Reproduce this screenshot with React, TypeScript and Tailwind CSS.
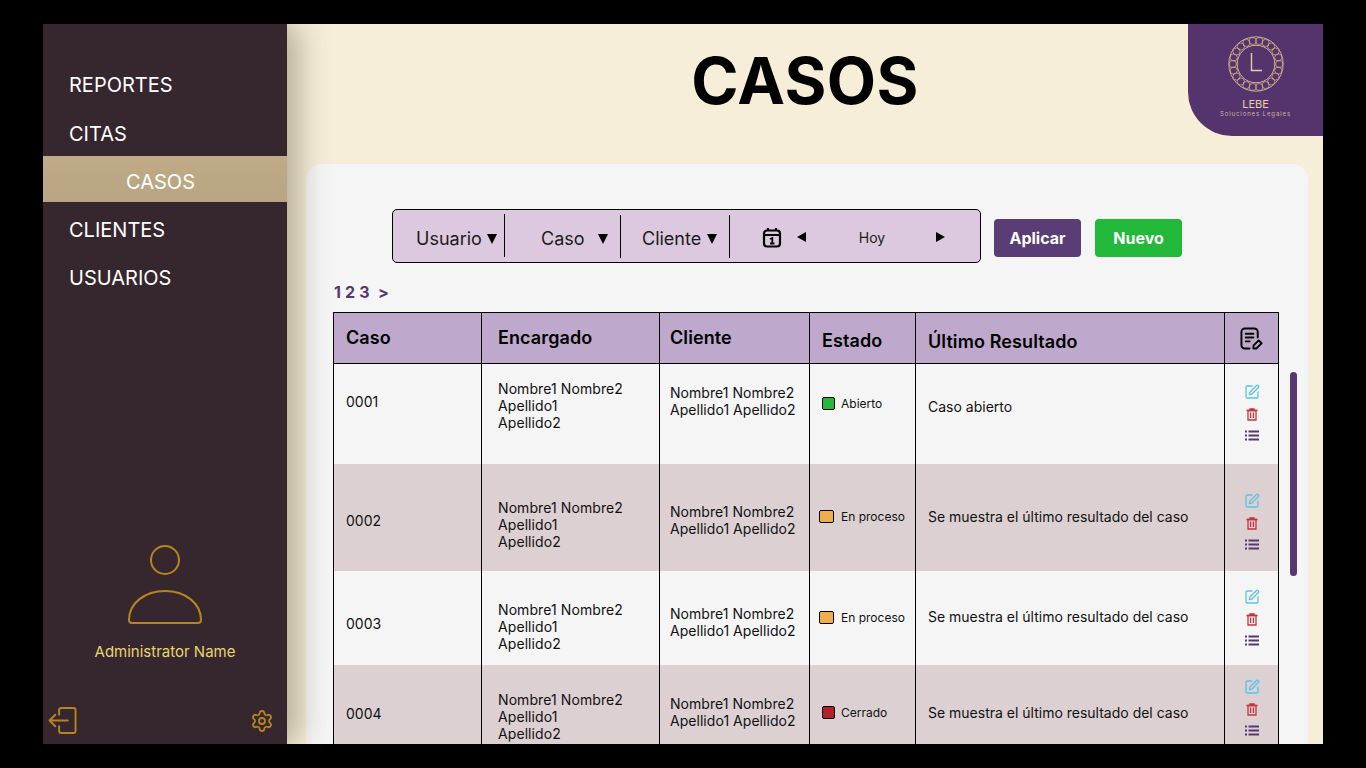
import React from 'react';
import { Settings, SquarePen } from 'lucide-react';

const font = 'font-["Inter",sans-serif]';

const NOMBRE = 'Nombre1 Nombre2';

const rows = [
    {
        caso: '0001', row: 'h-[100px] bg-[#f5f5f5]', casoPos: 'pt-[29px]', encPos: 'pt-[16px]', cliPos: 'pt-[20px]', estPos: 'pt-[31px] pl-[12px]',
        resPos: 'pt-[34px]', icoPos: 'pt-[20px]', estado: 'Abierto', color: 'bg-[#22b83a]', sw: 'w-[13px]', gap: 'gap-[6px]',
        resultado: 'Caso abierto',
    },
    {
        caso: '0002', row: 'h-[107px] bg-[#dcd0d3]', casoPos: 'pt-[48px]', encPos: 'pt-[35px]', cliPos: 'pt-[39px]', estPos: 'pt-[44px] pl-[9px]',
        resPos: 'pt-[44px]', icoPos: 'pt-[29px]', estado: 'En proceso', color: 'bg-[#f0ad4e]', sw: 'w-[15px]', gap: 'gap-[7px]',
        resultado: 'Se muestra el último resultado del caso',
    },
    {
        caso: '0003', row: 'h-[94px] bg-[#f5f5f5]', casoPos: 'pt-[44px]', encPos: 'pt-[30px]', cliPos: 'pt-[34px]', estPos: 'pt-[38px] pl-[9px]',
        resPos: 'pt-[37px]', icoPos: 'pt-[18px]', estado: 'En proceso', color: 'bg-[#f0ad4e]', sw: 'w-[15px]', gap: 'gap-[7px]',
        resultado: 'Se muestra el último resultado del caso',
    },
    {
        caso: '0004', row: 'h-[90px] bg-[#dcd0d3]', casoPos: 'pt-[40px]', encPos: 'pt-[26px]', cliPos: 'pt-[30px]', estPos: 'pt-[39px] pl-[12px]',
        resPos: 'pt-[39px]', icoPos: 'pt-[14px]', estado: 'Cerrado', color: 'bg-[#b3202a]', sw: 'w-[13px]', gap: 'gap-[6px]',
        resultado: 'Se muestra el último resultado del caso',
    },
];

const Triangle: React.FC<{ dir: 'down' | 'left' | 'right'; className?: string }> = ({ dir, className }) => {
    const points = dir === 'down' ? '0,0 10,0 5,10' : dir === 'left' ? '9,0 9,10 0,5' : '0,0 9,5 0,10';
    return (
        <svg viewBox={dir === 'down' ? '0 0 10 10' : '0 0 9 10'} className={className} fill="black">
            <polygon points={points} />
        </svg>
    );
};

// ring of small interlaced loops around the L
const knots = Array.from({ length: 22 }, (_, i) => {
    const a = (i / 22) * Math.PI * 2;
    return { cx: 28 + Math.cos(a) * 23.2, cy: 28 + Math.sin(a) * 23.2 };
});

const Logo: React.FC = () => (
    <div className="absolute top-0 right-0 w-[135px] h-[112px] bg-[#55346e] rounded-bl-[44px] flex flex-col items-center">
        <svg viewBox="0 0 56 56" className="w-[56px] h-[56px] mt-[12px] shrink-0" fill="none" stroke="#d8b98a">
            <circle cx="28" cy="28" r="27.2" strokeWidth="0.9" />
            {knots.map((k, i) => (
                <circle key={i} cx={k.cx} cy={k.cy} r="3.6" strokeWidth="0.7" />
            ))}
            <circle cx="28" cy="28" r="18.8" strokeWidth="1" />
            <path d="M23.5 17V34.5H34" strokeWidth="1.4" stroke="#e6cb9f" />
        </svg>
        <span className={`${font} text-[11px] leading-[12px] mt-[6px] text-[#e6cfa8]`}>LEBE</span>
        <span className={`${font} text-[6px] leading-[8px] tracking-[0.9px] text-[#cbb49a]`}>Soluciones Legales</span>
    </div>
);

const CalendarIcon: React.FC = () => (
    <svg viewBox="0 0 20 21" className="w-[20px] h-[21px]" fill="none" stroke="black" strokeWidth="2.2">
        <rect x="2" y="3.5" width="16" height="16" rx="3" />
        <path d="M2 8H18M6 1V4M14 1V4" />
        <path d="M8 12L10.3 11V16.5M8 16.5H12.5" strokeWidth="1.8" />
    </svg>
);

const NoteEditIcon: React.FC = () => (
    <svg viewBox="0 0 24 24" className="w-[23px] h-[23px] mt-[1px]" fill="none" stroke="black" strokeWidth="2" strokeLinecap="round" strokeLinejoin="round">
        <path d="M10 22.5H5a3.5 3.5 0 0 1-3.5-3.5V5A3.5 3.5 0 0 1 5 1.5h10A3.5 3.5 0 0 1 18.5 5v6" />
        <path d="M6 7H14M6 11H14M6 15H10" />
        <path d="M14 22.5v-3L19.5 14l3 3L17 22.5Z" />
    </svg>
);

const TrashIcon: React.FC = () => (
    <svg viewBox="0 0 12 13" className="w-[12px] h-[13px] mb-[9px]" fill="none" stroke="#c8323c" strokeWidth="1.3">
        <path d="M0.5 2.5H11.5M4 2.5V1H8V2.5" />
        <path d="M2 2.5V12H10V2.5Z" />
        <path d="M4.6 4.5V10M7.4 4.5V10" />
    </svg>
);

const ListIcon: React.FC = () => (
    <svg viewBox="0 0 14 11" className="w-[14px] h-[11px]" fill="#56386f">
        <rect x="0" y="0.5" width="2" height="2" />
        <rect x="3.5" y="0.5" width="10.5" height="2" />
        <rect x="0" y="4.5" width="2" height="2" />
        <rect x="3.5" y="4.5" width="10.5" height="2" />
        <rect x="0" y="8.5" width="2" height="2" />
        <rect x="3.5" y="8.5" width="10.5" height="2" />
    </svg>
);

const LogoutIcon: React.FC = () => (
    <svg viewBox="0 0 30 28" className="w-[30px] h-[27px]" fill="none" stroke="#b5851f" strokeWidth="2" strokeLinecap="round" strokeLinejoin="round">
        <path d="M11 8V3a2 2 0 0 1 2-2h13a2 2 0 0 1 2 2v22a2 2 0 0 1-2 2H13a2 2 0 0 1-2-2v-5" />
        <path d="M20 14H1M7 8L1 14L7 20" />
    </svg>
);

const UserIcon: React.FC = () => (
    <svg viewBox="0 0 76 79" className="w-[76px] h-[79px]" fill="none" stroke="#b5851f" strokeWidth="2">
        <circle cx="38" cy="15" r="14" />
        <path d="M5 78a3 3 0 0 1-3-3C2 58 18 46 38 46S74 58 74 75a3 3 0 0 1-3 3Z" />
    </svg>
);

const Sidebar: React.FC = () => (
    <aside className={`${font} relative z-10 w-[244px] shrink-0 h-full bg-[#36262d] flex flex-col shadow-[10px_0_30px_rgba(70,60,40,0.4)] text-white text-[20px]`}>
        <nav className="pt-[37px] flex flex-col">
            <a className="h-12 flex items-center pl-[26px]">REPORTES</a>
            <a className="h-[47px] flex items-center pl-[26px] pt-[2px]">CITAS</a>
            <a className="h-[46px] mb-[3px] flex items-center pl-[83px] pt-[5px] bg-gradient-to-b from-[#c0aa88] to-[#b9a583]">CASOS</a>
            <a className="h-12 flex items-center pl-[26px] pt-[1px]">CLIENTES</a>
            <a className="h-12 flex items-center pl-[26px] pt-[1px]">USUARIOS</a>
        </nav>
        <div className="mt-auto flex flex-col items-center">
            <UserIcon />
            <span className="text-[15px] leading-[20px] mt-[18px] text-[#e9d56f]">Administrator Name</span>
        </div>
        <div className="flex items-center justify-between mt-[45px] mb-[10px] pl-[5px] pr-[13px]">
            <LogoutIcon />
            <Settings size={24} color="#b5851f" strokeWidth={1.8} />
        </div>
    </aside>
);

const FilterBar: React.FC = () => (
    <div className="w-[589px] h-[54px] bg-[#dcc9df] border border-black rounded-[5px] flex items-center text-[18px] text-[#1c1c1c]">
        <div className="w-[112px] h-[43px] -mt-[1px] pt-[5px] border-r border-black flex items-center pl-[23px] gap-[5px]">
            <span>Usuario</span>
            <Triangle dir="down" className="w-[10px] h-[10px] mt-[2px]" />
        </div>
        <div className="w-[116px] h-[43px] mt-[1px] pt-[3px] border-r border-black flex items-center pl-[36px] gap-[13px]">
            <span>Caso</span>
            <Triangle dir="down" className="w-[10px] h-[10px] mt-[2px]" />
        </div>
        <div className="w-[109px] h-[43px] mt-[1px] pt-[3px] border-r border-black flex items-center pl-[21px] gap-[6px]">
            <span>Cliente</span>
            <Triangle dir="down" className="w-[10px] h-[10px] mt-[2px]" />
        </div>
        <div className="flex-1 flex items-center pl-[32px] pt-[2px]">
            <CalendarIcon />
            <Triangle dir="left" className="w-[9px] h-[10px] ml-[15px]" />
            <span className="w-[130px] pl-[2px] text-center text-[14px]">Hoy</span>
            <Triangle dir="right" className="w-[9px] h-[10px]" />
        </div>
    </div>
);

const Cell: React.FC<{ className: string; children: React.ReactNode }> = ({ className, children }) => (
    <div className={`${className} h-full text-[14px] leading-[17px] text-[#111] border-r border-black shrink-0`}>{children}</div>
);

const Table: React.FC = () => (
    <div className="w-[946px] shrink-0 border-l border-t border-black">
        <div className="h-[51px] flex bg-[#bea9cc] border-b border-black text-[18px] tracking-[0.1px] font-semibold text-black">
            <div className="w-[148px] h-full border-r border-black pl-[12px] pt-[11px]">Caso</div>
            <div className="w-[178px] h-full border-r border-black pl-[16px] pt-[11px]">Encargado</div>
            <div className="w-[150px] h-full border-r border-black pl-[10px] pt-[11px]">Cliente</div>
            <div className="w-[106px] h-full border-r border-black pl-[12px] pt-[14px]">Estado</div>
            <div className="w-[309px] h-full border-r border-black pl-[12px] pt-[15px]">Último Resultado</div>
            <div className="w-[54px] h-full border-r border-black flex items-center justify-center"><NoteEditIcon /></div>
        </div>
        {rows.map((r) => (
            <div key={r.caso} className={`${r.row} flex`}>
                <Cell className={`w-[148px] pl-[12px] ${r.casoPos}`}>{r.caso}</Cell>
                <Cell className={`w-[178px] pl-[16px] tracking-[0.08px] ${r.encPos}`}>
                    {NOMBRE}<br />Apellido1<br />Apellido2
                </Cell>
                <Cell className={`w-[150px] pl-[10px] tracking-[0.04px] ${r.cliPos}`}>
                    {NOMBRE}<br />Apellido1 Apellido2
                </Cell>
                <Cell className={`w-[106px] ${r.estPos}`}>
                    <div className={`flex items-center ${r.gap}`}>
                        <span className={`${r.color} ${r.sw} h-[13px] rounded-[2px] border border-black`} />
                        <span className="text-[12px]">{r.estado}</span>
                    </div>
                </Cell>
                <Cell className={`w-[309px] pl-[12px] ${r.resPos}`}>{r.resultado}</Cell>
                <Cell className={`w-[54px] flex flex-col items-center ${r.icoPos}`}>
                    <SquarePen size={16} color="#5bc4e6" strokeWidth={2} className="mb-[8px]" />
                    <TrashIcon />
                    <ListIcon />
                </Cell>
            </div>
        ))}
    </div>
);

const App: React.FC = () => {
    return (
        <div className="h-screen w-full bg-black flex items-center justify-center overflow-hidden">
            <div className={`${font} w-[1280px] h-[720px] flex overflow-hidden`}>
                <Sidebar />
                <main className="relative flex-1 h-full bg-[#f6eed8] flex flex-col overflow-hidden">
                    <h1 className="h-[140px] shrink-0 pt-[17px] text-center text-[64px] tracking-[0.4px] leading-[80px] font-bold text-black">CASOS</h1>
                    <Logo />
                    <section className="flex-1 ml-[19px] mr-[15px] bg-[#f5f5f5] rounded-t-[16px] pt-[45px] pl-[27px] overflow-hidden">
                        <div className="flex items-start pl-[59px]">
                            <FilterBar />
                            <button className="ml-[13px] mt-[10px] w-[87px] h-[38px] rounded-[4px] bg-[#5a3d75] text-white font-bold text-[16px]">Aplicar</button>
                            <button className="ml-[14px] mt-[10px] w-[87px] h-[38px] rounded-[4px] bg-[#22b83a] text-white font-bold text-[16px]">Nuevo</button>
                        </div>
                        <p className="mt-[19px] h-[20px] pl-[1px] text-[16px] leading-[20px] font-bold text-[#56386f] tracking-[0.2px]">
                            1 2 3<span className="ml-[8px]">&gt;</span>
                        </p>
                        <div className="mt-[10px] flex items-start">
                            <Table />
                            <div className="ml-[11px] mt-[60px] w-[7px] h-[204px] shrink-0 rounded-full bg-[#56386f]" />
                        </div>
                    </section>
                </main>
            </div>
        </div>
    );
};

export default App;
